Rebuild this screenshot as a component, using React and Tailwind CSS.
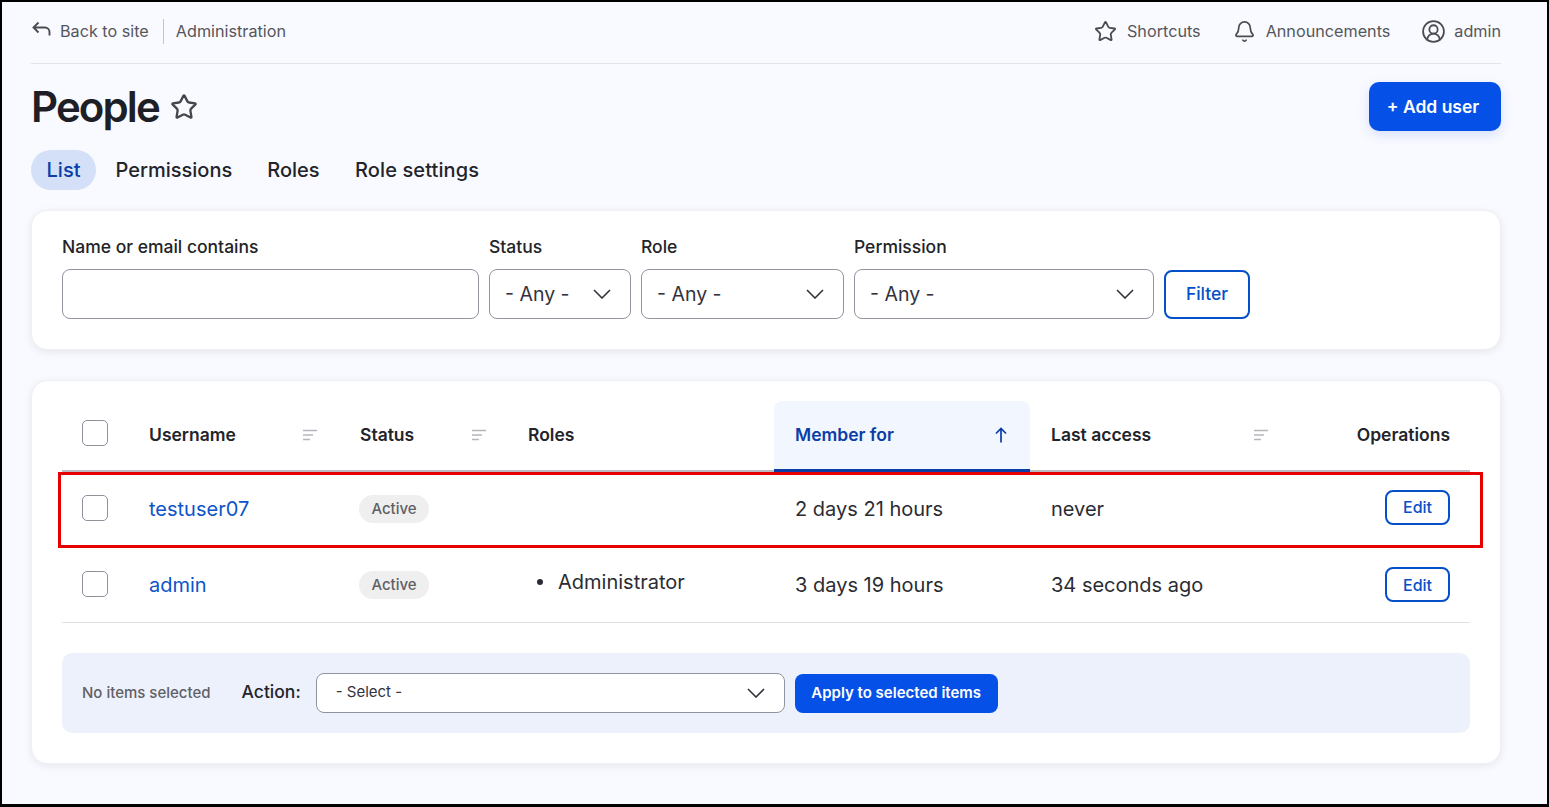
import { Star, Bell, CircleUserRound } from 'lucide-react';

const SortIcon = ({ className = '' }) => (
  <svg width="16" height="12" viewBox="0 0 16 12" className={className}>
    <path d="M1 1.5h14M1 6h10M1 10.5h7" stroke="#b4b6bb" strokeWidth="1.5" fill="none" />
  </svg>
);

const Chevron = () => (
  <svg width="18" height="10" viewBox="0 0 18 10" className="shrink-0">
    <path d="M1 1l8 8 8-8" stroke="#33333d" strokeWidth="1.6" fill="none" />
  </svg>
);

const BackIcon = () => (
  <svg width="20" height="16" viewBox="0 0 20 16" className="mr-[9px] -mt-[6px] shrink-0">
    <path d="M7.5 1.5L2.5 6.5l5 5M2.5 6.5H14a4.5 4.5 0 0 1 4.5 4.5v3.5" stroke="#4b4c52" strokeWidth="1.9" fill="none" />
  </svg>
);

const SortUpIcon = () => (
  <svg width="12" height="16" viewBox="0 0 12 16" className="shrink-0">
    <path d="M6 15.5V1.5M1 6.5l5-5 5 5" stroke="#0a3ea6" strokeWidth="1.7" fill="none" />
  </svg>
);

const Checkbox = () => (
  <span className="block w-[26px] h-[26px] rounded-[5px] border border-[#8e929c] bg-white" />
);

const FilterSelect = ({ width }) => (
  <div className={`flex items-center justify-between h-[50px] pl-[15px] pr-[19px] rounded-[8px] border border-[#91949f] bg-white text-[19.5px] text-[#33333d] ${width}`}>
    <span className="pt-[2px]">- Any -</span>
    <Chevron />
  </div>
);

const Field = ({ label, children }) => (
  <div className="flex flex-col">
    <label className="text-[17.5px] leading-[22px] font-medium text-[#232429] mb-[11px]">{label}</label>
    {children}
  </div>
);

const rows = [
  {
    name: 'testuser07', role: '', member: '2 days 21 hours', last: 'never',
    height: 'h-[76px]', text: 'pb-[2px]', box: 'pb-[4px]', badge: 'pb-[4px]', edit: 'pb-[2px]',
  },
  {
    name: 'admin', role: 'Administrator', member: '3 days 19 hours', last: '34 seconds ago',
    height: 'h-[75px] border-b border-[#dfe1e6]', text: 'pt-[2px]', box: '', badge: 'pb-[2px]', edit: 'pt-[4px]',
  },
];

export default function App() {
  return (
    <div className="relative h-[807px] border-2 border-black border-b-[3px] bg-[#f9faff] overflow-hidden font-['Inter',sans-serif] text-[#232429]">
      <div className="pl-[29px] pr-[46px]">
        <header className="flex items-center justify-between h-[62px] pb-[2px] border-b border-[#e3e5ea] text-[16.2px] text-[#55565b]">
          <div className="flex items-center">
            <BackIcon />
            <span className="pr-[14px]">Back to site</span>
            <span className="pl-[12px] border-l border-[#c2c4ca] leading-[25px]">Administration</span>
          </div>
          <div className="flex items-center">
            <Star size={23} strokeWidth={1.9} className="text-[#4b4c52] mr-[10px]" />
            <span className="mr-[32px]">Shortcuts</span>
            <Bell size={23} strokeWidth={1.8} className="text-[#4b4c52] mr-[10px]" />
            <span className="mr-[31px]">Announcements</span>
            <CircleUserRound size={25} strokeWidth={1.7} className="text-[#4b4c52] mr-[8px]" />
            <span>admin</span>
          </div>
        </header>

        <div className="flex items-center justify-between mt-[18px] h-[49px]">
          <div className="flex items-center">
            <h1 className="text-[42px] leading-[49px] font-semibold tracking-[-0.045em] text-[#1e1f26]">People</h1>
            <Star size={28} strokeWidth={2} className="ml-[11px] text-[#45464c]" />
          </div>
          <button className="w-[132px] h-[49px] pr-[4px] pt-[2px] rounded-[10px] bg-[#0550e6] text-white text-[17.5px] font-semibold shadow-[0_4px_12px_rgba(5,80,230,0.15)]">
            + Add user
          </button>
        </div>

        <nav className="flex items-center mt-[19px] h-[40px] text-[20px] font-medium text-[#232429]">
          <span className="flex items-center justify-center w-[65px] h-[40px] rounded-full bg-[#d3e0f8] text-[#0a3ea6]">List</span>
          <span className="ml-[19.5px]">Permissions</span>
          <span className="ml-[35px]">Roles</span>
          <span className="ml-[35.5px] tracking-[0.005em]">Role settings</span>
        </nav>

        <section className="mt-[20px] h-[140px] rounded-[16px] bg-white border border-[#eef0f4] shadow-[0_2px_8px_rgba(0,0,0,0.08)] pl-[30px] pt-[25px]">
          <div className="flex gap-[10px]">
            <Field label="Name or email contains">
              <div className="w-[417px] h-[50px] rounded-[8px] border border-[#91949f] bg-white" />
            </Field>
            <Field label="Status">
              <FilterSelect width="w-[142px]" />
            </Field>
            <Field label="Role">
              <FilterSelect width="w-[203px]" />
            </Field>
            <Field label="Permission">
              <FilterSelect width="w-[300px]" />
            </Field>
            <button className="self-end w-[86px] h-[49px] rounded-[8px] border-2 border-[#0550c8] text-[#0550c8] bg-white text-[17.5px] font-medium">
              Filter
            </button>
          </div>
        </section>

        <section className="mt-[30px] h-[384px] rounded-[16px] bg-white border border-[#eef0f4] shadow-[0_2px_8px_rgba(0,0,0,0.08)] px-[30px] pt-[20px]">
          <table className="w-[1408px] table-fixed border-collapse text-left">
            <colgroup>
              <col className="w-[66px]" />
              <col className="w-[211px]" />
              <col className="w-[168px]" />
              <col className="w-[267px]" />
              <col className="w-[256px]" />
              <col className="w-[260px]" />
              <col className="w-[180px]" />
            </colgroup>
            <thead>
              <tr className="h-[70px] text-[17.5px] font-semibold text-[#232429]">
                <th className="pl-[20px] pb-[4px] border-b-[3px] border-[#bbbcc0]"><Checkbox /></th>
                <th className="pl-[21px] pr-[21px] font-semibold border-b-[3px] border-[#bbbcc0]">
                  <div className="flex items-center justify-between">Username<SortIcon /></div>
                </th>
                <th className="pl-[21px] pr-[20px] font-semibold border-b-[3px] border-[#bbbcc0]">
                  <div className="flex items-center justify-between">Status<SortIcon /></div>
                </th>
                <th className="pl-[21px] font-semibold border-b-[3px] border-[#bbbcc0]">Roles</th>
                <th className="pl-[21px] pr-[23px] font-semibold text-[#0a3ea6] bg-[#f2f6fe] rounded-t-[8px] border-b-[4px] border-[#0a3ea6]">
                  <div className="flex items-center justify-between">Member for<SortUpIcon /></div>
                </th>
                <th className="pl-[21px] pr-[20px] font-semibold border-b-[3px] border-[#bbbcc0]">
                  <div className="flex items-center justify-between pr-[1px]">Last access<SortIcon /></div>
                </th>
                <th className="pr-[20px] text-right font-semibold border-b-[3px] border-[#bbbcc0]">Operations</th>
              </tr>
            </thead>
            <tbody className="text-[20px] text-[#2b2c33]">
              {rows.map((row) => (
                <tr key={row.name} className={row.height}>
                  <td className={`pl-[20px] ${row.box}`}><Checkbox /></td>
                  <td className={`pl-[21px] text-[#0d54c9] ${row.text}`}>{row.name}</td>
                  <td className={`pl-[20px] ${row.badge}`}>
                    <span className="inline-flex items-center justify-center w-[70px] h-[28px] rounded-full bg-[#efefef] text-[15px] font-medium text-[#5f6066]">Active</span>
                  </td>
                  <td className={`pl-[30px] ${row.text}`}>
                    {row.role && (
                      <span className="flex items-center -mt-[6px]">
                        <span className="w-[6px] h-[6px] rounded-full bg-[#2b2c33] mr-[15px]" />
                        {row.role}
                      </span>
                    )}
                  </td>
                  <td className={`pl-[21px] ${row.text}`}>{row.member}</td>
                  <td className={`pl-[21px] ${row.text}`}>{row.last}</td>
                  <td className={`pr-[20px] text-right ${row.edit}`}>
                    <button className="w-[65px] h-[35px] -mt-[4px] rounded-[8px] border-2 border-[#0550c8] text-[#0550c8] text-[16px] font-medium align-middle">
                      Edit
                    </button>
                  </td>
                </tr>
              ))}
            </tbody>
          </table>

          <div className="flex items-center w-[1408px] h-[80px] mt-[30px] rounded-[10px] bg-[#edf1fc] pl-[20px]">
            <span className="pt-[2px] text-[15px] font-medium text-[#5f6066]">No items selected</span>
            <span className="ml-[31px] pb-[1px] text-[17.5px] font-medium text-[#232429]">Action:</span>
            <div className="flex items-center justify-between w-[469px] h-[40px] ml-[15px] pl-[19px] pr-[19px] rounded-[8px] border border-[#91949f] bg-white text-[15px] text-[#33333d]">
              <span>- Select -</span>
              <Chevron />
            </div>
            <button className="w-[203px] h-[39px] ml-[10px] mt-[2px] rounded-[8px] bg-[#0550e6] text-white text-[15px] font-semibold">
              Apply to selected items
            </button>
          </div>
        </section>
      </div>

      {/* red highlight the screenshot puts over the first row */}
      <div className="absolute left-[56px] top-[470px] w-[1425px] h-[76px] border-[3px] border-[#e60000] pointer-events-none" />
    </div>
  );
}
